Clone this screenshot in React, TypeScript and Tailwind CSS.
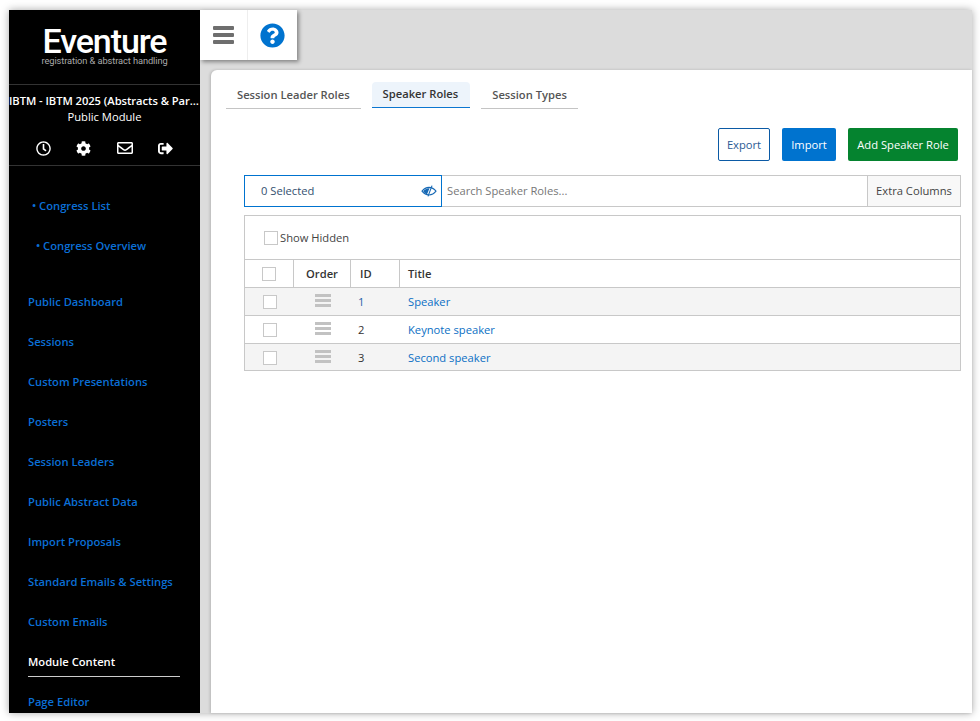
import { FaCog, FaQuestionCircle, FaRegClock, FaRegEnvelope, FaSignOutAlt } from "react-icons/fa";

const topLinks = ["Public Dashboard", "Sessions", "Custom Presentations", "Posters", "Session Leaders", "Public Abstract Data", "Import Proposals", "Standard Emails & Settings", "Custom Emails"];

const roles = [
  { id: 1, title: "Speaker", idClass: "text-[#1f5fa8]", rowClass: "bg-[#f4f4f4]" },
  { id: 2, title: "Keynote speaker", idClass: "text-[#333]", rowClass: "bg-white" },
  { id: 3, title: "Second speaker", idClass: "text-[#333]", rowClass: "bg-[#f4f4f4]" },
];

function Checkbox() {
  return <span className="block size-[14px] border border-[#c8c8c8] bg-white" />;
}

function EyeIcon() {
  return (
    <svg width="16" height="12" viewBox="0 0 16 12" className="shrink-0">
      <path d="M1 6.2C3 3.6 5.3 2.4 8 2.4s5 1.2 7 3.8c-2 2.600-4.300 3.800-7 3.800S3 8.800 1 6.200Z" fill="none" stroke="#1769b5" strokeWidth="1.100" />
      <path d="M2.200 6.200C3.600 4.500 5.400 3.400 7.600 3.200l1 .1-2.600 6C4.500 8.900 3.200 7.800 2.200 6.200Z" fill="#1769b5" />
      <path d="M11 .6 7 11.400" stroke="#1769b5" strokeWidth="1.100" />
    </svg>
  );
}

function Sidebar() {
  return (
    <aside className="flex w-[191px] shrink-0 flex-col overflow-hidden bg-black text-white">
      <div className="flex h-[75px] shrink-0 flex-col items-center border-b border-[#333] pt-[17px]">
        <div className="text-[34px] leading-[28px] font-medium tracking-[-1.1px] [font-family:Roboto,sans-serif]">Eventure</div>
        <div className="mt-[1px] text-[9.300px] leading-[9px] tracking-[-0.1px] text-[#aaa] [font-family:Roboto,sans-serif]">registration &amp; abstract handling</div>
      </div>
      <div className="flex h-[81px] shrink-0 flex-col border-b border-[#333] pt-[8px] text-center">
        <div className="truncate text-[11.2px] leading-[16px] font-semibold tracking-[-0.05px]">IBTM - IBTM 2025 (Abstracts &amp; Participants)</div>
        <div className="text-[11.2px] leading-[16px]">Public Module</div>
        <div className="mt-[15px] flex items-center justify-between pr-[27px] pl-[27px] text-[15px]">
          <FaRegClock />
          <FaCog />
          <FaRegEnvelope className="text-[16px]" />
          <FaSignOutAlt />
        </div>
      </div>
      <nav className="flex flex-col text-[11.2px] leading-[16px] font-semibold text-[#0b6fd6]">
        <a className="mt-[32px] pl-[23px]">• Congress List</a>
        <a className="mt-[24px] pl-[27px]">• Congress Overview</a>
        <div className="mt-[40px] flex flex-col gap-[24px] pl-[19px]">
          {topLinks.map((link) => (
            <a key={link}>{link}</a>
          ))}
        </div>
        <div className="mt-[24px] mr-[20px] ml-[19px] border-b border-[#ccc] pb-[6px] text-white">Module Content</div>
        <a className="mt-[17px] pl-[19px]">Page Editor</a>
      </nav>
    </aside>
  );
}

function Tab({ label, active }: { label: string; active?: boolean }) {
  if (active) {
    return <div className="flex h-[26px] items-center rounded-t-[4px] border-b border-[#0b76d0] bg-[#edf4fb] pr-[12px] pb-[1px] pl-[11px] text-[#333]">{label}</div>;
  }
  return <div className="flex h-[27px] items-center border-b border-[#c4c4c4] px-[11px] pt-[1px] text-[#555]">{label}</div>;
}

function RolesCard() {
  return (
    <section className="mt-[10px] ml-[11px] flex-1 rounded-tl-[6px] bg-white pt-[12px] pr-[11px] pl-[15px] shadow-[-1px_0_3px_rgba(0,0,0,0.18)]">
      <div className="flex items-start gap-[11px] text-[11.2px] font-semibold">
        <Tab label="Session Leader Roles" />
        <Tab label="Speaker Roles" active />
        <Tab label="Session Types" />
      </div>
      <div className="mt-[19px] mr-[3px] flex justify-end gap-[12px] text-[11.2px] font-medium">
        <button className="h-[33px] w-[52px] rounded-[2px] border border-[#0b5aa5] bg-white pt-[1px] text-[#2a5a94]">Export</button>
        <button className="h-[33px] w-[54px] rounded-[2px] bg-[#0073cf] pt-[1px] text-white">Import</button>
        <button className="h-[33px] w-[110px] rounded-[2px] bg-[#05832f] pt-[1px] text-white">Add Speaker Role</button>
      </div>
      <div className="mt-[14px] ml-[18px] flex h-[32px] text-[11.2px]">
        <div className="flex w-[198px] items-center justify-between border border-[#0073cf] pr-[4px] pl-[16px] text-[#33506f]">
          <span>0 Selected</span>
          <EyeIcon />
        </div>
        <div className="flex flex-1 items-center border-y border-[#c8c8c8] pl-[5px] text-[#777]">Search Speaker Roles...</div>
        <div className="flex w-[94px] items-center justify-center border border-[#c8c8c8] bg-[#f8f8f8] text-[#444]">Extra Columns</div>
      </div>
      <div className="mt-[8px] ml-[18px] border border-[#c8c8c8] text-[11.2px]">
        <div className="flex h-[44px] items-center gap-[2px] border-b border-[#c8c8c8] pl-[19px] text-[#444]">
          <Checkbox />
          <span className="pt-[1px]">Show Hidden</span>
        </div>
        <div className="grid h-[27px] grid-cols-[49px_57px_49px_1fr] items-stretch font-semibold text-[#333]">
          <div className="flex items-center justify-center border-r border-[#c8c8c8]"><Checkbox /></div>
          <div className="flex items-center justify-center border-r border-[#c8c8c8] pt-[1px]">Order</div>
          <div className="flex items-center border-r border-[#c8c8c8] pt-[1px] pl-[9px]">ID</div>
          <div className="flex items-center pt-[1px] pl-[8px]">Title</div>
        </div>
        {roles.map((role) => (
          <div key={role.id} className={`grid h-[28px] grid-cols-[49px_57px_49px_1fr] items-center border-t border-[#c8c8c8] last:h-[27px] last:pt-[1px] ${role.rowClass}`}>
            <div className="flex justify-center"><Checkbox /></div>
            <div className="flex justify-center pb-[2px]">
              <span className="flex w-[16px] flex-col gap-[2px]">
                <i className="block h-[3px] bg-[#c2c2c2]" />
                <i className="block h-[3px] bg-[#c2c2c2]" />
                <i className="block h-[3px] bg-[#c2c2c2]" />
              </span>
            </div>
            <div className={`pt-[1px] pl-[7px] ${role.idClass}`}>{role.id}</div>
            <a className="pt-[1px] pl-[8px] text-[#0b6fc4]">{role.title}</a>
          </div>
        ))}
      </div>
    </section>
  );
}

export default function App() {
  return (
    <div className="h-[721px] w-[980px] overflow-hidden bg-white pt-[10px] pl-[9px] [font-family:'Open_Sans',sans-serif]">
      <div className="flex h-[703px] w-[963px] bg-[#dcdcdc] shadow-[0_0_8px_rgba(0,0,0,0.35)]">
        <Sidebar />
        <main className="flex min-w-0 flex-1 flex-col">
          <div className="flex h-[50px] w-[97px] shrink-0 items-center bg-white shadow-[2px_2px_4px_rgba(0,0,0,0.4)]">
            <div className="flex h-full w-[48px] items-center justify-center border-r border-[#eee]">
              <span className="flex w-[21px] flex-col gap-[3px]">
                <i className="block h-[4px] rounded-[1px] bg-[#6e6e6e]" />
                <i className="block h-[4px] rounded-[1px] bg-[#6e6e6e]" />
                <i className="block h-[4px] rounded-[1px] bg-[#6e6e6e]" />
              </span>
            </div>
            <div className="flex flex-1 items-center justify-center text-[#0073cf]">
              <FaQuestionCircle className="text-[25px]" />
            </div>
          </div>
          <RolesCard />
        </main>
      </div>
    </div>
  );
}
